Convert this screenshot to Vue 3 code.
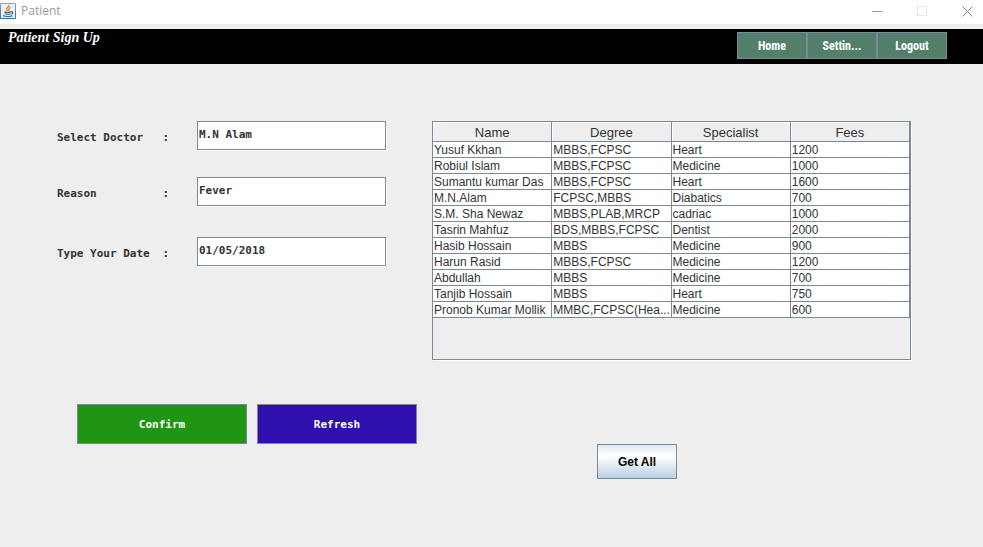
<script setup>
import { ref, reactive } from 'vue'

const menu = ['Home', 'Settin...', 'Logout']

const fields = reactive([
  { id: 'doctor', label: 'Select Doctor', value: 'M.N Alam' },
  { id: 'reason', label: 'Reason', value: 'Fever' },
  { id: 'date', label: 'Type Your Date', value: '01/05/2018' },
])

const columns = ['Name', 'Degree', 'Specialist', 'Fees']

const doctors = ref([
  ['Yusuf Kkhan', 'MBBS,FCPSC', 'Heart', '1200'],
  ['Robiul Islam', 'MBBS,FCPSC', 'Medicine', '1000'],
  ['Sumantu kumar Das', 'MBBS,FCPSC', 'Heart', '1600'],
  ['M.N.Alam', 'FCPSC,MBBS', 'Diabatics', '700'],
  ['S.M. Sha Newaz', 'MBBS,PLAB,MRCP', 'cadriac', '1000'],
  ['Tasrin Mahfuz', 'BDS,MBBS,FCPSC', 'Dentist', '2000'],
  ['Hasib Hossain', 'MBBS', 'Medicine', '900'],
  ['Harun Rasid', 'MBBS,FCPSC', 'Medicine', '1200'],
  ['Abdullah', 'MBBS', 'Medicine', '700'],
  ['Tanjib Hossain', 'MBBS', 'Heart', '750'],
  ['Pronob Kumar Mollik', 'MMBC,FCPSC(Hea...', 'Medicine', '600'],
])
</script>

<template>
  <div class="window">
    <header class="titlebar">
      <svg class="java" viewBox="0 0 16 16" width="16" height="16" aria-hidden="true">
        <defs>
          <linearGradient id="tile" x1="0" y1="0" x2="0" y2="1">
            <stop offset="0" stop-color="#8ba5b8" />
            <stop offset="1" stop-color="#3e6a8d" />
          </linearGradient>
        </defs>
        <rect width="16" height="16" rx="1" fill="url(#tile)" />
        <rect x="1" y="1" width="14" height="14" fill="#eef1f3" />
        <path d="M8.8 1.800c1.200 1.900-2.800 2.700-2.300 4.300.2.800 1 1.300 1 2M10.500 4.200c-1.500.8-2 1.400-1.500 2.200.4.600.3 1.100-.4 1.700" fill="none" stroke="#e8842c" stroke-width="1.400" />
        <path d="M4.300 8.900c1 .7 5.500.6 6.700 0M4.800 10.700c1.300.7 4.500.7 5.700 0M11 8.700c2.400-.6 2.400 1.800.2 2.400M3 12.600c1.500 1.400 7.700 1.200 9.500 0" fill="none" stroke="#477595" stroke-width="1.300" />
      </svg>
      <span class="caption">Patient</span>
      <div class="controls">
        <button type="button" aria-label="Minimize">
          <svg width="11" height="11" viewBox="0 0 11 11"><path d="M0 5.500h10" stroke="#999" /></svg>
        </button>
        <button type="button" aria-label="Maximize" disabled>
          <svg width="11" height="11" viewBox="0 0 11 11"><rect x=".5" y=".5" width="9" height="9" fill="none" stroke="#e6e6e6" /></svg>
        </button>
        <button type="button" aria-label="Close">
          <svg width="11" height="11" viewBox="0 0 11 11"><path d="M.5.5l10 10M10.500.5l-10 10" stroke="#888" /></svg>
        </button>
      </div>
    </header>

    <div class="banner">
      <h1>Patient Sign Up</h1>
      <nav>
        <button v-for="item in menu" :key="item" type="button">{{ item }}</button>
      </nav>
    </div>

    <main>
      <form @submit.prevent>
        <div v-for="field in fields" :key="field.id" class="field">
          <label :for="field.id"><span>{{ field.label }}</span><span>:</span></label>
          <input :id="field.id" v-model="field.value" type="text" />
        </div>
        <div class="actions">
          <button type="submit" class="confirm">Confirm</button>
          <button type="reset" class="refresh">Refresh</button>
        </div>
      </form>

      <section>
        <div class="pane">
          <table>
            <thead>
              <tr>
                <th v-for="name in columns" :key="name" scope="col">{{ name }}</th>
              </tr>
            </thead>
            <tbody>
              <tr v-for="row in doctors" :key="row[0]">
                <td v-for="(cell, i) in row" :key="i">{{ cell }}</td>
              </tr>
            </tbody>
          </table>
        </div>
        <button type="button" class="get-all">Get All</button>
      </section>
    </main>
  </div>
</template>

<style>
body {
  background: #eee;
}
</style>

<style scoped>
.window {
  min-height: 100vh;
  background: #eee;
  color: #333;
  font: 12px "Liberation Sans", sans-serif;
}

button,
input,
h1 {
  margin: 0;
  box-sizing: border-box;
}

.titlebar {
  display: flex;
  align-items: center;
  height: 24px;
  padding-bottom: 2px;
  box-sizing: border-box;
  background: #fff;
}

.caption {
  margin-left: 5px;
  color: #999;
  font: 12px/16px "Open Sans", sans-serif;
}

.controls {
  display: flex;
  gap: 34px;
  margin-left: auto;
  padding-right: 10px;
}

.controls button {
  padding: 0;
  border: 0;
  background: none;
}

.controls svg {
  display: block;
}

.banner {
  display: flex;
  justify-content: space-between;
  height: 35px;
  margin-top: 5px;
  padding: 0 36px 0 8px;
  background: #000;
}

h1 {
  color: #fff;
  font: italic bold 14px/18px "Liberation Serif", serif;
}

nav {
  display: flex;
  padding: 3px 0 5px;
}

nav button {
  width: 70px;
  padding: 0;
  border: 1px solid #7a8a99;
  background: #527f6a;
  color: #fff;
  font: bold 12px "Liberation Sans Narrow", "Roboto Condensed", sans-serif;
}

main {
  display: grid;
  grid-template-columns: 360px minmax(0, 1fr);
  gap: 15px;
  padding: 57px 72px 57px 57px;
}

.field {
  display: flex;
  align-items: center;
  margin-bottom: 27px;
}

.field + .field + .field {
  margin-top: 31px;
}

.field label {
  display: flex;
  justify-content: space-between;
  width: 112px;
  margin-right: 28px;
  padding-top: 5px;
  font: bold 11px/16px "DejaVu Sans Mono", monospace;
}

.field input {
  width: 189px;
  height: 29px;
  padding: 0 1px 3px;
  border: 1px solid #7a8a99;
  border-radius: 0;
  background: #fff;
  box-shadow: 1px 1px 0 #fff;
  color: #333;
  font: bold 11px/16px "DejaVu Sans Mono", monospace;
}

.actions {
  display: flex;
  gap: 10px;
  margin-top: 138px;
  padding-left: 20px;
}

.actions button {
  height: 40px;
  border: 1px solid #7a8a99;
  color: #fff;
  font: bold 11px "DejaVu Sans Mono", monospace;
}

.confirm {
  width: 170px;
  background: #209513;
}

.refresh {
  width: 160px;
  background: #2f0fad;
}

.pane {
  height: 239px;
  box-sizing: border-box;
  border: 1px solid #7a8a99;
  box-shadow: 1px 1px 0 #fff;
}

table {
  width: 100%;
  table-layout: fixed;
  border-collapse: separate;
  border-spacing: 0;
}

th,
td {
  box-sizing: border-box;
  overflow: hidden;
  border-right: 1px solid #7a8a99;
  border-bottom: 1px solid #7a8a99;
  white-space: nowrap;
}

th {
  height: 20px;
  padding: 2px 0 0;
  box-shadow: inset 1px 1px 0 #fff;
  font: 13px/16px "Liberation Sans", sans-serif;
}

td {
  height: 16px;
  padding: 1px 0 0 1px;
  background: #fff;
  font: 12px/14px "Liberation Sans", sans-serif;
}

.get-all {
  display: block;
  width: 80px;
  height: 35px;
  margin: 84px 0 0 165px;
  padding: 0;
  border: 1px solid #7a8a99;
  background: linear-gradient(#dde8f3, #fff 30%, #fff 35%, #b8cfe5);
  color: #000;
  font: bold 12px "Liberation Sans", sans-serif;
}
</style>
